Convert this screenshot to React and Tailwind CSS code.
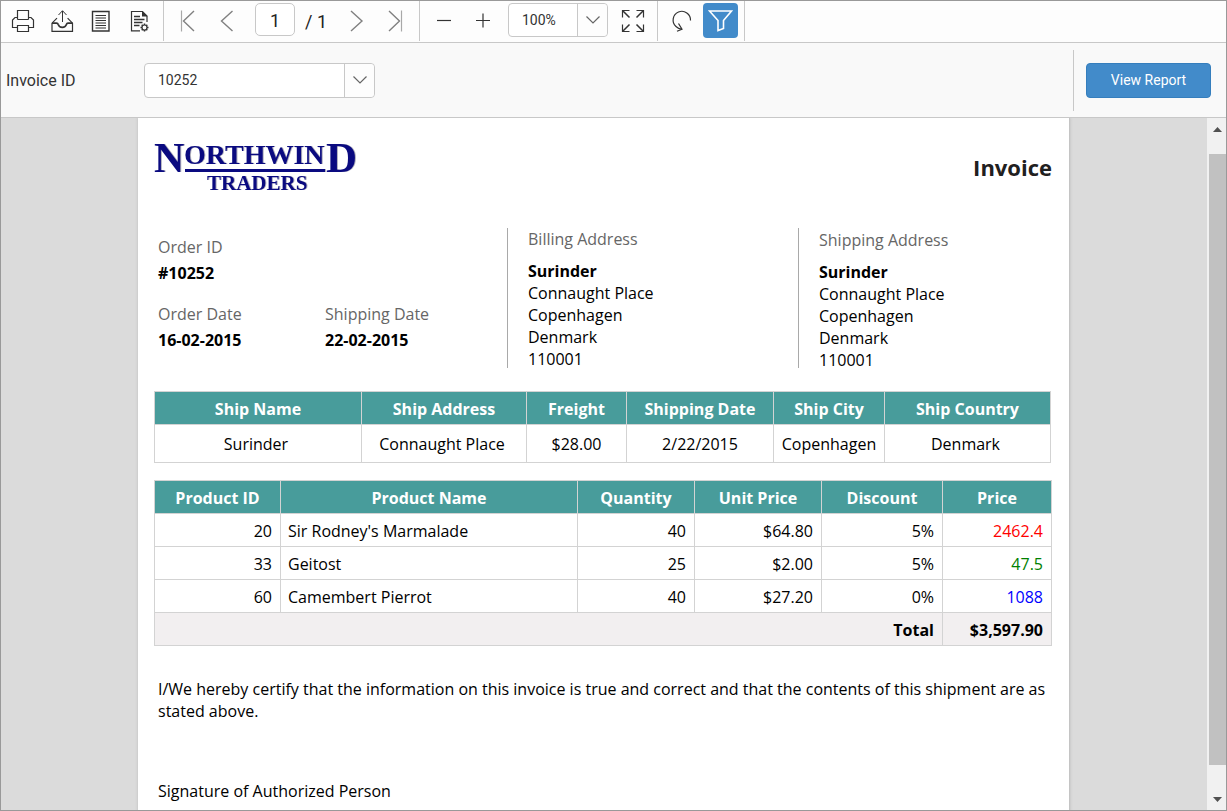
import React from "react";

const details = {
  name: "Surinder",
  lines: ["Connaught Place", "Copenhagen", "Denmark", "110001"],
};

const shipment = [
  { head: "Ship Name", value: "Surinder", width: "w-[207px]", pad: "pr-1" },
  { head: "Ship Address", value: "Connaught Place", width: "w-[165px]", pad: "pr-1" },
  { head: "Freight", value: "$28.00", width: "w-[100px]", pad: "" },
  { head: "Shipping Date", value: "2/22/2015", width: "w-[147px]", pad: "" },
  { head: "Ship City", value: "Copenhagen", width: "w-[111px]", pad: "" },
  { head: "Ship Country", value: "Denmark", width: "w-[166px]", pad: "pr-1" },
];

const productColumns = [
  ["Product ID", "w-[126px]"],
  ["Product Name", "w-[297px]"],
  ["Quantity", "w-[117px]"],
  ["Unit Price", "w-[127px]"],
  ["Discount", "w-[121px]"],
  ["Price", "w-[109px]"],
];

const products = [
  { id: 20, name: "Sir Rodney's Marmalade", qty: 40, unit: "$64.80", discount: "5%", price: "2462.4", color: "text-[#ff0000]" },
  { id: 33, name: "Geitost", qty: 25, unit: "$2.00", discount: "5%", price: "47.5", color: "text-[#008000]" },
  { id: 60, name: "Camembert Pierrot", qty: 40, unit: "$27.20", discount: "0%", price: "1088", color: "text-[#0000ff]" },
];

const cell = "border border-[#d3d3d3] px-2 pb-0 pt-[2px]";

function Icon({ children, className = "text-[#333333]" }) {
  return (
    <svg width="24" height="24" viewBox="0 0 24 24" fill="none" stroke="currentColor" strokeWidth="1.2" className={className} aria-hidden="true">
      {children}
    </svg>
  );
}

function ToolButton({ label, children }) {
  return (
    <button type="button" aria-label={label} className="flex h-10 w-[39px] shrink-0 items-center justify-center">
      {children}
    </button>
  );
}

function Separator() {
  return <div className="h-10 w-px shrink-0 bg-[#c8c8c8]" />;
}

function Chevron() {
  return (
    <svg width="16" height="10" viewBox="0 0 16 10" fill="none" stroke="#666666" strokeWidth="1.2" aria-hidden="true">
      <path d="M1.500 1.500 8 8 14.500 1.500" />
    </svg>
  );
}

function Combo({ id, label, value, width, height }) {
  return (
    <div className={`relative shrink-0 ${width} ${height}`}>
      <select id={id} aria-label={label} defaultValue={value} className="h-full w-full appearance-none rounded border border-[#c8c8c8] bg-white px-[13px] text-sm text-[#333333]">
        <option>{value}</option>
      </select>
      <span className="pointer-events-none absolute inset-y-px right-px flex w-[30px] items-center justify-center rounded-r border-l border-[#c8c8c8] bg-[#fdfdfd]">
        <Chevron />
      </span>
    </div>
  );
}

function Toolbar() {
  return (
    <div role="toolbar" aria-label="Report viewer" className="flex h-[42px] shrink-0 items-start border-b border-[#c8c8c8] bg-[#fdfdfd] pl-[2px]">
      <ToolButton label="Print">
        <Icon>
          <path d="M6.500 10.500V1.500h11v9" />
          <path d="M6.500 18.500h-5V11l2.500-2.500h2.500M17.500 18.500h5V11L20 8.500h-2.500" />
          <path d="M6.500 16.500h11v6h-11zM6.500 10.500h11" />
        </Icon>
      </ToolButton>
      <ToolButton label="Export">
        <Icon>
          <path d="M12.500 13V2M8.500 6 12.500 1.700 16.500 6" strokeWidth="1" />
          <path d="M7 9.200 2 14.200v8.100h20.500v-8.100l-4.900-5" />
          <path d="M2 14.200h4.600c.8 0 1.300.4 1.500 1.100.6 1.900 2.200 3.100 4.200 3.100s3.600-1.200 4.200-3.100c.2-.7.7-1.100 1.500-1.100h4.500" strokeWidth="1.700" />
        </Icon>
      </ToolButton>
      <ToolButton label="Print layout">
        <Icon>
          <path d="M3.500 2.500h16.500v19.500H3.500z" strokeWidth="1.400" />
          <path d="M6.500 6.500h10.500M6.500 9h10.500M6.500 11.500h10.500M6.500 14h10.500M6.500 16.500h10.500M6.500 19h10.500" strokeWidth="1.200" />
        </Icon>
      </ToolButton>
      <ToolButton label="Page setup">
        <Icon>
          <path d="M12 21.800H3.500V2.500h11l4.500 4.500v6" />
          <path d="M14 2v5.500h5.500z" fill="currentColor" stroke="none" />
          <path d="M6 7.500h6M6 10.500h10.500M6 13.500h8.500M6 16.500h5.500" strokeWidth="1.400" />
          <circle cx="16.500" cy="18.500" r="2.500" />
          <path d="M16.500 14.500v1.500M16.500 21v1.500M12.500 18.500h1.500M19 18.500h1.500M13.700 15.700l1 1M18.300 20.300l1 1M19.300 15.700l-1 1M14.700 20.300l-1 1" strokeWidth="1.500" />
        </Icon>
      </ToolButton>
      <div className="pl-1"><Separator /></div>
      <div className="flex pl-1">
        <ToolButton label="First page">
          <Icon className="text-[#808080]"><path d="M5.500 1.500v21" stroke="#a8a8a8" /><path d="M18 2 7.500 12 18 22" strokeWidth="1.400" /></Icon>
        </ToolButton>
        <ToolButton label="Previous page">
          <Icon className="text-[#808080]"><path d="M17.500 2 6.500 12l11 10" strokeWidth="1.400" /></Icon>
        </ToolButton>
      </div>
      <input aria-label="Current page" defaultValue="1" className="ml-[9px] mt-[2px] h-[33px] w-10 shrink-0 rounded-[5px] border border-[#c8c8c8] bg-white pt-[2px] text-center text-lg text-[#222222]" />
      <span className="ml-[10px] mt-[7px] w-8 whitespace-nowrap text-lg text-[#222222]">/ 1</span>
      <div className="flex">
        <ToolButton label="Next page">
          <Icon className="text-[#808080]"><path d="M6 2 17 12 6 22" strokeWidth="1.400" /></Icon>
        </ToolButton>
        <ToolButton label="Last page">
          <Icon className="text-[#808080]"><path d="M17.500 1.500v21" stroke="#a8a8a8" /><path d="M5 2l10.500 10L5 22" strokeWidth="1.400" /></Icon>
        </ToolButton>
      </div>
      <div className="pl-1"><Separator /></div>
      <div className="flex pl-1">
        <ToolButton label="Zoom out">
          <Icon><path d="M5 11.500h14" /></Icon>
        </ToolButton>
        <ToolButton label="Zoom in">
          <Icon><path d="M5 11.500h14M12 4.500v14" /></Icon>
        </ToolButton>
      </div>
      <div className="ml-[6px] mt-[2px]">
        <Combo id="zoom" label="Zoom level" value="100%" width="w-[100px]" height="h-[34px]" />
      </div>
      <div className="flex pl-[5px]">
        <ToolButton label="Full screen">
          <Icon>
            <path d="M1.500 8.500v-7h7M15.500 1.500h7v7M22.500 15.500v7h-7M8.500 22.500h-7v-7" />
            <path d="M2 2l6.500 6.500M22 2l-6.500 6.500M22 22l-6.500-6.500M2 22l6.500-6.500" strokeWidth="1.500" />
          </Icon>
        </ToolButton>
      </div>
      <div className="pl-[5px]"><Separator /></div>
      <div className="flex pl-1">
        <ToolButton label="Refresh">
          <Icon>
            <path d="M20.500 11.500A8.700 8.700 0 1 0 6 17.500q2.500 2.300 5.500 2.700" />
            <path d="M8.500 14.500l3.500 5.700-5 2" />
          </Icon>
        </ToolButton>
      </div>
      <button type="button" aria-label="Parameters" aria-pressed="true" className="ml-[2px] mt-[2px] flex h-[35px] w-[35px] shrink-0 items-center justify-center rounded-sm bg-[#428bca]">
        <svg width="25" height="25" viewBox="0 0 25 25" fill="none" stroke="#ffffff" strokeWidth="1.600" aria-hidden="true">
          <path d="M1.500 3h22L15.500 12.500v8L10 22.500v-10z" />
        </svg>
      </button>
      <div className="pl-[6px]"><Separator /></div>
    </div>
  );
}

function Parameters() {
  return (
    <form className="flex h-[75px] shrink-0 items-center border-b border-[#c8c8c8] bg-[#f9f9f9] pl-[5px] pr-[15px]" onSubmit={(e) => e.preventDefault()}>
      <label htmlFor="invoice" className="w-[138px] pt-[2px] text-base text-[#333333]">Invoice ID</label>
      <Combo id="invoice" value="10252" width="w-[231px]" height="h-[35px]" />
      <div className="ml-auto h-[61px] w-px bg-[#c8c8c8]" />
      <button type="submit" className="ml-3 h-[35px] w-[125px] rounded border border-[#357ebd] bg-[#428bca] text-sm text-white">View Report</button>
    </form>
  );
}

function Logo() {
  return (
    <svg width="208" height="72" viewBox="0 0 208 72" role="img" aria-label="Northwind Traders" className="font-['Liberation_Serif',serif] drop-shadow-[1px_0px_0px_#b0b0bc]">
      <g fill="#0a0a80">
        <text x="0" y="46" fontSize="42" fontWeight="bold">N</text>
        <text x="30" y="38" fontSize="28" fontWeight="bold">ORTHWIN</text>
        <text x="172" y="46" fontSize="43" fontWeight="bold">D</text>
        <path d="M31 43h140v3H31z" />
        <text x="53" y="64" fontSize="21" fontWeight="bold">TRADERS</text>
      </g>
    </svg>
  );
}

function Field({ label, value }) {
  return (
    <div>
      <dt className="text-[#666666]">{label}</dt>
      <dd className="mt-1 font-bold">{value}</dd>
    </div>
  );
}

function Address({ title, top }) {
  return (
    <section className={`h-[140px] border-l border-[#a9a9a9] pl-5 ${top}`}>
      <h2 className="text-[#666666]">{title}</h2>
      <address className="mt-[10px] not-italic">
        <strong className="block">{details.name}</strong>
        {details.lines.map((line) => (
          <span key={line} className="block">{line}</span>
        ))}
      </address>
    </section>
  );
}

function Report() {
  return (
    <article className="mx-auto w-full max-w-[932px] border-r border-[#c4c4c4] bg-white px-4 pt-2 font-['Open_Sans',sans-serif] text-base leading-[22px] text-black shadow-[0_0_3px_#bbbbbb]">
      <header className="flex h-[102px] items-start justify-between">
        <Logo />
        <h1 className="mr-px mt-[26px] text-[22px] font-bold leading-[30px] text-[#1f2020]">Invoice</h1>
      </header>
      <div className="grid h-[140px] grid-cols-[353fr_291fr_255fr]">
        <dl className="grid grid-cols-[167px_1fr] content-start gap-y-[19px] pl-1 pt-2">
          <div className="col-span-2"><Field label="Order ID" value="#10252" /></div>
          <Field label="Order Date" value="16-02-2015" />
          <Field label="Shipping Date" value="22-02-2015" />
        </dl>
        <Address title="Billing Address" top="" />
        <Address title="Shipping Address" top="pt-px" />
      </div>
      <table className="mt-[23px] table-fixed border-collapse text-center">
        <thead>
          <tr className="h-[33px] bg-[#489c9b] text-white">
            {shipment.map((c) => (
              <th key={c.head} scope="col" className={`border border-[#d3d3d3] p-0 pt-[2px] font-bold ${c.width}`}>{c.head}</th>
            ))}
          </tr>
        </thead>
        <tbody>
          <tr className="h-[38px]">
            {shipment.map((c) => (
              <td key={c.head} className={`border border-[#d3d3d3] p-0 ${c.pad}`}>{c.value}</td>
            ))}
          </tr>
        </tbody>
      </table>
      <table className="mt-[17px] table-fixed border-collapse text-right">
        <thead>
          <tr className="h-[33px] bg-[#489c9b] text-center text-white">
            {productColumns.map(([head, width]) => (
              <th key={head} scope="col" className={`border border-[#d3d3d3] p-0 pt-[2px] font-bold ${width}`}>{head}</th>
            ))}
          </tr>
        </thead>
        <tbody>
          {products.map((p) => (
            <tr key={p.id} className="h-[33px]">
              <td className={cell}>{p.id}</td>
              <td className="border border-[#d3d3d3] px-[7px] pb-0 pt-[2px] text-left">{p.name}</td>
              <td className={cell}>{p.qty}</td>
              <td className={cell}>{p.unit}</td>
              <td className={cell}>{p.discount}</td>
              <td className={`${cell} ${p.color}`}>{p.price}</td>
            </tr>
          ))}
        </tbody>
        <tfoot>
          <tr className="h-[33px] bg-[#f2eff0] font-bold">
            <td colSpan={5} className={cell}>Total</td>
            <td className={cell}>$3,597.90</td>
          </tr>
        </tfoot>
      </table>
      <p className="mt-8 px-1">
        I/We hereby certify that the information on this invoice is true and correct and that the contents of this shipment are as stated above.
      </p>
      <p className="mt-[58px] px-1 pb-24">Signature of Authorized Person</p>
    </article>
  );
}

function Scrollbar() {
  return (
    <div aria-hidden="true" className="flex w-[19px] shrink-0 flex-col bg-[#f1f1f1] pl-[2px]">
      <div className="flex h-9 justify-center pt-[9px]">
        <svg width="9" height="5" viewBox="0 0 9 5"><path d="M0 5 4.500 0 9 5z" fill="#505050" /></svg>
      </div>
      <div className="flex-1 bg-[#c1c1c1]" />
      <div className="flex h-[45px] items-end justify-center pb-2">
        <svg width="9" height="5" viewBox="0 0 9 5"><path d="M0 0 4.500 5 9 0z" fill="#505050" /></svg>
      </div>
    </div>
  );
}

export default function App() {
  return (
    <div className="flex h-screen flex-col border border-[#999999] font-[Roboto,sans-serif]">
      <Toolbar />
      <Parameters />
      <div className="flex min-h-0 flex-1">
        <main className="min-w-0 flex-1 overflow-hidden bg-[#dbdbdb]">
          <Report />
        </main>
        <Scrollbar />
      </div>
    </div>
  );
}
